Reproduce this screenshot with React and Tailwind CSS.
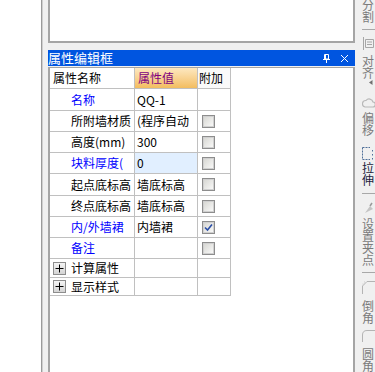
import React from "react";

const rows = [
  { name: "名称", blue: true, value: "QQ-1", check: null, h: "h-[22px]" },
  { name: "所附墙材质", value: "(程序自动", check: false, h: "h-[21px]" },
  { name: "高度(mm)", value: "300", check: false, h: "h-[21px]" },
  { name: "块料厚度(", blue: true, value: "0", edit: true, check: false, h: "h-[21px]" },
  { name: "起点底标高", value: "墙底标高", check: false, h: "h-[22px]" },
  { name: "终点底标高", value: "墙底标高", check: false, h: "h-[21px]" },
  { name: "内/外墙裙", blue: true, value: "内墙裙", check: true, h: "h-[21px]" },
  { name: "备注", blue: true, value: "", check: false, h: "h-[21px]" },
  { name: "计算属性", plus: true, h: "h-[19px]" },
  { name: "显示样式", plus: true, h: "h-[18px]" },
];

const CheckBox = ({ checked }) => (
  <span className="flex h-[13px] w-[13px] items-center justify-center border border-[#8d8d8d] bg-white">
    <span className="flex h-[11px] w-[11px] items-center justify-center border border-[#d0d0d0] bg-linear-to-br from-[#d8d8d4] to-[#f8f8f7]">
      {checked && (
        <svg width="9" height="9" viewBox="0 0 9 9">
          <path d="M1 4.5 L3.5 7 L8 1.5" fill="none" stroke="#2a4ea6" strokeWidth="1.6" />
        </svg>
      )}
    </span>
  </span>
);

const PlusBox = () => (
  <span className="flex h-[13px] w-[13px] items-center justify-center border border-[#8d8d8d] bg-linear-to-b from-[#f4f4f4] to-[#d4d4d4]">
    <svg width="9" height="9" viewBox="0 0 9 9">
      <path d="M0.5 4.5 H8.5 M4.5 0.5 V8.5" stroke="#000" strokeWidth="1" />
    </svg>
  </span>
);

const VText = ({ chars, dark }) => (
  <div className={`flex flex-col text-[12px] leading-[12px] ${dark ? "text-[#1c1c3c]" : "text-[#7b7b7b]"}`}>
    {chars.split("").map((c, i) => (
      <span key={i}>{c}</span>
    ))}
  </div>
);

const Sep = ({ mt }) => <div className={`${mt} h-px w-full bg-[#a8a8a8]`} />;

const App = () => {
  return (
    <div className="flex h-[372px] w-[375px] overflow-hidden bg-white font-['Noto_Sans_CJK_SC',sans-serif]">
      <div className="w-[41px] shrink-0 bg-white" />
      <div className="w-px shrink-0 bg-[#9a9a9a]" />
      <div className="w-px shrink-0 bg-[#cfcfcf]" />

      {/* main column */}
      <div className="flex w-[312px] shrink-0 flex-col bg-[#f0f0f0] pl-[5px]">
        <div className="h-[43px] shrink-0 border-2 border-t-0 border-[#a5a5a5] bg-white" />

        <div className="mt-[7px] flex h-[16px] shrink-0 items-center bg-[#0055e0] text-white">
          <span className="text-[13px] leading-[16px]">属性编辑框</span>
          <div className="ml-auto mr-[6px] flex items-center gap-[9px]">
            <svg width="9" height="9" viewBox="0 0 9 9">
              <path d="M2.5 0.5 H6.5 V5 H2.5 Z M3.5 1 V5 M1 5.5 H8 M4.5 5.5 V9" fill="none" stroke="#fff" strokeWidth="1" />
            </svg>
            <svg width="9" height="9" viewBox="0 0 9 9">
              <path d="M1 1 L8 8 M8 1 L1 8" stroke="#fff" strokeWidth="1" />
            </svg>
          </div>
        </div>

        <div className="mt-px flex-1 border-2 border-b-0 border-t border-[#a5a5a5] bg-white">
          <div className="grid w-[181px] grid-cols-[85px_63px_33px] text-[12px] leading-[14px] text-black">
            <div className="flex h-[21px] items-center border-r border-b border-[#c0c0c0] pl-[3px]">属性名称</div>
            <div className="flex h-[21px] items-center border-r border-b border-[#c0c0c0] bg-linear-to-b from-[#fde8c0] to-[#f3bd5e] pl-[3px] text-[#800080]">
              属性值
            </div>
            <div className="flex h-[21px] items-center border-r border-b border-[#c0c0c0] bg-[#fafafa] pl-px">附加</div>

            {rows.map((r) => (
              <React.Fragment key={r.name}>
                <div className={`flex ${r.h} items-center overflow-hidden whitespace-nowrap border-r border-b border-[#c0c0c0] ${r.plus ? "pl-[3px]" : "pl-[21px]"} ${r.blue ? "text-[#0000ff]" : ""}`}>
                  {r.plus && (
                    <span className="mr-[5px]">
                      <PlusBox />
                    </span>
                  )}
                  {r.name}
                </div>
                <div className={`flex ${r.h} items-center overflow-hidden whitespace-nowrap border-r border-b border-[#c0c0c0] pl-[2px] ${r.edit ? "bg-[#e1efff]" : ""}`}>
                  {r.value}
                </div>
                <div className={`flex ${r.h} items-center border-r border-b border-[#c0c0c0] pl-[4px]`}>
                  {r.check !== null && r.check !== undefined && <CheckBox checked={r.check} />}
                </div>
              </React.Fragment>
            ))}
          </div>
        </div>
      </div>

      {/* right toolbar */}
      <div className="flex w-[20px] shrink-0 flex-col overflow-hidden bg-[#f0f0f0] pl-[7px]">
        <div className="mt-[-1px]">
          <VText chars="分割" />
        </div>
        <Sep mt="mt-[6px]" />
        <svg className="mt-[7px] shrink-0" width="13" height="13" viewBox="0 0 13 13">
          <path d="M1.5 0 V13 M3.5 2.5 H11.5 V10.5 H3.5 Z M5 5 H10 M5 7.5 H10" fill="none" stroke="#a6a6a6" strokeWidth="1" />
        </svg>
        <div className="mt-[5px]">
          <VText chars="对齐" />
        </div>
        <svg className="ml-[7px] mt-px shrink-0" width="4" height="5" viewBox="0 0 4 5">
          <path d="M3.5 0 V5 L0 2.5 Z" fill="#707070" />
        </svg>
        <svg className="mt-[12px] shrink-0" width="13" height="11" viewBox="0 0 13 11">
          <path d="M3 10 H10.5 A2.5 2.5 0 0 0 11 5 A4 4 0 0 0 4 3.5 A3.3 3.3 0 0 0 3 10 Z" fill="none" stroke="#b8b8b8" strokeWidth="1.2" />
        </svg>
        <div className="mt-[4px]">
          <VText chars="偏移" />
        </div>
        <svg className="mt-[11px] shrink-0" width="13" height="13" viewBox="0 0 13 13">
          <path d="M0.5 0.5 H8 M0.5 0.5 V12.5 M0.5 12.5 H8 M10.5 3 V4.5 M10.5 7 V8.5 M10.5 11 V12.5" fill="none" stroke="#4f6f99" strokeWidth="1" strokeDasharray="2 1" />
        </svg>
        <div className="mt-[2px]">
          <VText chars="拉伸" dark />
        </div>
        <Sep mt="mt-[7px]" />
        <svg className="mt-[9px] shrink-0" width="13" height="12" viewBox="0 0 13 12">
          <path d="M3 11 L8 4 L11 7 Z" fill="#c4c4c4" />
          <path d="M8 4 L10 1" stroke="#9a9a9a" strokeWidth="1.5" />
        </svg>
        <div className="mt-[4px]">
          <VText chars="设置夹点" />
        </div>
        <Sep mt="mt-[6px]" />
        <svg className="mt-[8px] shrink-0" width="13" height="13" viewBox="0 0 13 13">
          <path d="M0.5 13 V5 L5 0.5 H13" fill="none" stroke="#b4b4b4" strokeWidth="1" />
          <path d="M0.5 3 H3 M2 1 H4" stroke="#cccccc" strokeWidth="1" strokeDasharray="1 1" />
        </svg>
        <div className="mt-[6px]">
          <VText chars="倒角" />
        </div>
        <svg className="mt-[6px] shrink-0" width="13" height="12" viewBox="0 0 13 12">
          <path d="M0.5 12 V5 Q0.5 0.5 5 0.5 H13" fill="none" stroke="#b4b4b4" strokeWidth="1" />
        </svg>
        <div className="mt-[6px]">
          <VText chars="圆角" />
        </div>
      </div>
    </div>
  );
};

export default App;
